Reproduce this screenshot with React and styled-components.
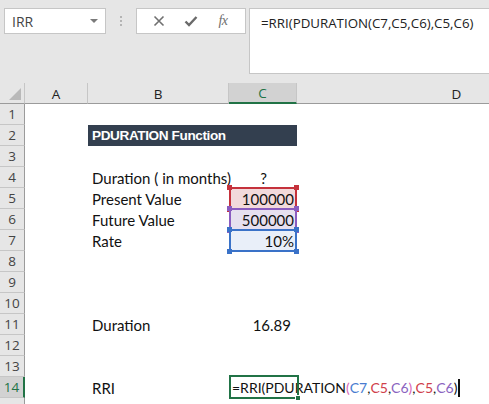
import React from "react";
import styled, { createGlobalStyle, css } from "styled-components";

const GlobalStyle = createGlobalStyle`
  html, body {
    margin: 0;
    padding: 0;
    background: #ffffff;
  }
  * {
    box-sizing: border-box;
  }
`;

const UI_FONT = `"Open Sans", "Noto Sans", "Liberation Sans", sans-serif`;
const CELL_FONT = `Lato, "Liberation Sans", sans-serif`;

const GREEN = "#217346";

const Window = styled.div`
  width: 489px;
  height: 404px;
  overflow: hidden;
  background: #e6e6e6;
  display: flex;
  flex-direction: column;
`;

const FormulaBar = styled.div`
  height: 83px;
  flex: none;
  display: flex;
  align-items: flex-start;
  padding: 8px 0 0 4px;
`;

const NameBox = styled.div`
  width: 102px;
  height: 26px;
  background: #ffffff;
  border: 1px solid #c6c6c6;
  display: flex;
  align-items: center;
  justify-content: space-between;
  padding: 0 7px 0 7px;
  font-family: ${UI_FONT};
  font-size: 14px;
  color: #444444;
`;

const Caret = styled.span`
  width: 0;
  height: 0;
  border-left: 4px solid transparent;
  border-right: 4px solid transparent;
  border-top: 4px solid #7a7a7a;
`;

const Grip = styled.div`
  width: 30px;
  height: 26px;
  display: flex;
  flex-direction: column;
  align-items: center;
  justify-content: center;
  gap: 2px;

  span {
    width: 2px;
    height: 2px;
    background: #b4b4b4;
  }
`;

const ButtonsBox = styled.div`
  width: 110px;
  height: 26px;
  background: #ffffff;
  border: 1px solid #c6c6c6;
  display: flex;
  align-items: center;
  justify-content: space-around;
  padding: 0 6px;
`;

const IconButton = styled.span`
  width: 24px;
  display: flex;
  align-items: center;
  justify-content: center;
  color: #6f6f6f;
`;

const FxLabel = styled.span`
  font-family: "Liberation Serif", serif;
  font-style: italic;
  font-size: 14px;
  color: #6f6f6f;
  letter-spacing: -0.5px;
`;

const FormulaInput = styled.div`
  flex: 1;
  height: 66px;
  margin-left: 3px;
  background: #ffffff;
  border: 1px solid #c6c6c6;
  border-right: none;
  padding: 5px 0 0 11px;
  font-family: ${UI_FONT};
  font-size: 13.3px;
  color: #222222;
  white-space: nowrap;
`;

const Sheet = styled.div`
  flex: 1;
  display: grid;
  grid-template-columns: 25px 63px 141px 68px 320px;
  grid-auto-rows: 21px;
  background: #ffffff;
`;

const Corner = styled.div`
  background: #e6e6e6;
  border-right: 1px solid #c6c6c6;
  border-bottom: 1px solid #9b9b9b;
  display: flex;
  align-items: flex-end;
  justify-content: flex-end;
  padding: 0 3px 3px 0;
`;

const ColHeader = styled.div`
  background: ${(p) => (p.$selected ? "#d2d2d2" : "#e6e6e6")};
  border-right: 1px solid #c6c6c6;
  border-bottom: ${(p) => (p.$selected ? `2px solid ${GREEN}` : "1px solid #9b9b9b")};
  color: ${(p) => (p.$selected ? GREEN : "#222222")};
  font-family: ${UI_FONT};
  font-size: 13.5px;
  display: flex;
  align-items: center;
  justify-content: center;
  padding-top: 1px;
`;

const RowHeader = styled.div`
  background: ${(p) => (p.$selected ? "#d2d2d2" : "#e6e6e6")};
  border-bottom: 1px solid #c6c6c6;
  border-right: ${(p) => (p.$selected ? `2px solid ${GREEN}` : "1px solid #9b9b9b")};
  color: ${(p) => (p.$selected ? GREEN : "#444444")};
  font-family: ${UI_FONT};
  font-size: 13.5px;
  display: flex;
  align-items: center;
  justify-content: center;
`;

const Cell = styled.div`
  position: relative;
  display: flex;
  align-items: flex-end;
  justify-content: ${(p) =>
    p.$align === "right" ? "flex-end" : p.$align === "center" ? "center" : "flex-start"};
  padding: 0 ${(p) => p.$padRight ?? 3}px 1px 4px;
  font-family: ${CELL_FONT};
  font-size: 15px;
  line-height: 18px;
  color: #111111;
  white-space: nowrap;
`;

const TitleCell = styled(Cell)`
  grid-column: span 2;
  background: #333f4f;
  color: #ffffff;
  font-family: "Liberation Sans", Arial, sans-serif;
  font-weight: 700;
  font-size: 13.6px;
  letter-spacing: -0.4px;
  align-items: center;
  padding: 1px 0 0 4px;
`;

const RangeCell = styled(Cell)`
  background: ${(p) => p.$fill};
  z-index: ${(p) => p.$layer};

  &::after {
    content: "";
    position: absolute;
    top: -1px;
    bottom: -1px;
    left: 0;
    right: 0;
    border: 2px solid ${(p) => p.$color};
    pointer-events: none;
  }
`;

const Handle = styled.span`
  position: absolute;
  width: 5px;
  height: 5px;
  background: ${(p) => p.$color};
  z-index: 2;
  ${(p) => (p.$top ? css`top: -3px;` : css`bottom: -3px;`)}
  ${(p) => (p.$left ? css`left: -2px;` : css`right: -2px;`)}
`;

const ActiveCell = styled(Cell)`
  z-index: 5;
  padding-left: 3px;
  font-size: 14px;

  &::after {
    content: "";
    position: absolute;
    top: -2px;
    bottom: -1px;
    left: 0;
    right: -2px;
    border: 2px solid ${GREEN};
    pointer-events: none;
  }
`;

const FillHandle = styled.span`
  position: absolute;
  right: -4px;
  bottom: -3px;
  width: 6px;
  height: 6px;
  background: ${GREEN};
  border: 1px solid #ffffff;
  z-index: 2;
`;

const Token = styled.span`
  color: ${(p) => p.$color || "#111111"};
`;

const TextCursor = styled.span`
  display: inline-block;
  flex: none;
  width: 2px;
  height: 18px;
  margin-left: 1px;
  background: #111111;
`;

const RED = "#d0404a";
const PURPLE = "#8a63c0";
const BLUE = "#4a7cd0";
const PINK = "#d867b8";

const formulaTokens = [
  ["=RRI(PDURATION"],
  ["(", PINK],
  ["C7", BLUE],
  [","],
  ["C5", RED],
  [","],
  ["C6", PURPLE],
  [")", PINK],
  [","],
  ["C5", RED],
  [","],
  ["C6", PURPLE],
  [")"],
];

const ranges = {
  5: { value: "100000", color: "#c5323c", fill: "#f2dadb", layer: 1 },
  6: { value: "500000", color: "#8a5cc0", fill: "#e6e0ef", layer: 2 },
  7: { value: "10%", color: "#3a72c8", fill: "#e9eff9", layer: 3 },
};

const labels = {
  4: { b: "Duration ( in months)", c: "?", align: "center" },
  5: { b: "Present Value" },
  6: { b: "Future Value" },
  7: { b: "Rate" },
  11: { b: "Duration", c: "16.89", align: "right", padRight: 6 },
  14: { b: "RRI" },
};

const RangeHandles = ({ color }) => (
  <>
    <Handle $color={color} $top $left />
    <Handle $color={color} $top />
    <Handle $color={color} $left />
    <Handle $color={color} />
  </>
);

const renderC = (row) => {
  if (ranges[row]) {
    const r = ranges[row];
    return (
      <RangeCell key="c" $align="right" $padRight={3} $color={r.color} $fill={r.fill} $layer={r.layer}>
        {r.value}
        <RangeHandles color={r.color} />
      </RangeCell>
    );
  }
  if (row === 14) {
    return (
      <ActiveCell key="c">
        {formulaTokens.map(([text, color], i) => (
          <Token key={i} $color={color}>
            {text}
          </Token>
        ))}
        <TextCursor />
        <FillHandle />
      </ActiveCell>
    );
  }
  const l = labels[row];
  return (
    <Cell key="c" $align={l?.align} $padRight={l?.padRight}>
      {l?.c}
    </Cell>
  );
};

export default function App() {
  const rows = Array.from({ length: 15 }, (_, i) => i + 1);

  return (
    <>
      <GlobalStyle />
      <Window>
        <FormulaBar>
          <NameBox>
            IRR
            <Caret />
          </NameBox>
          <Grip>
            <span />
            <span />
            <span />
          </Grip>
          <ButtonsBox>
            <IconButton>
              <svg width="12" height="12" viewBox="0 0 12 12">
                <path d="M1.5 1.5 L10.5 10.5 M10.5 1.5 L1.5 10.5" stroke="#707070" strokeWidth="1.6" fill="none" />
              </svg>
            </IconButton>
            <IconButton>
              <svg width="14" height="12" viewBox="0 0 14 12">
                <path d="M1.5 6.5 L5 10 L12.5 2" stroke="#6a6a6a" strokeWidth="2.4" fill="none" />
              </svg>
            </IconButton>
            <IconButton>
              <FxLabel>fx</FxLabel>
            </IconButton>
          </ButtonsBox>
          <FormulaInput>=RRI(PDURATION(C7,C5,C6),C5,C6)</FormulaInput>
        </FormulaBar>

        <Sheet>
          <Corner>
            <svg width="12" height="12" viewBox="0 0 12 12">
              <path d="M12 0 L12 12 L0 12 Z" fill="#b9b9b9" />
            </svg>
          </Corner>
          {["A", "B", "C", "D"].map((col) => (
            <ColHeader key={col} $selected={col === "C"}>
              {col}
            </ColHeader>
          ))}

          {rows.map((row) => (
            <React.Fragment key={row}>
              <RowHeader $selected={row === 14}>{row < 15 ? row : null}</RowHeader>
              <Cell />
              {row === 2 ? (
                <TitleCell>PDURATION Function</TitleCell>
              ) : (
                <>
                  <Cell>{labels[row]?.b}</Cell>
                  {renderC(row)}
                </>
              )}
              <Cell />
            </React.Fragment>
          ))}
        </Sheet>
      </Window>
    </>
  );
}
